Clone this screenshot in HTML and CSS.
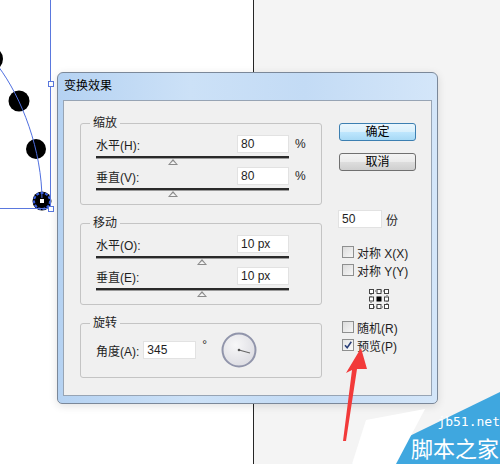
FILE: index.html
```html
<!DOCTYPE html>
<html lang="zh-CN">
<head>
  <meta charset="UTF-8">
  <title>变换效果</title>
  <link rel="stylesheet" href="styles.css">
</head>
<body>
  <div class="screen">
    <div class="artboard"></div>
    <div class="pasteboard"></div>

    <!-- selected artwork on the canvas -->
    <svg class="artwork" width="253" height="230" viewBox="0 0 253 230">
      <circle cx="-9" cy="59" r="12" fill="#000"/>
      <circle cx="19" cy="101" r="10.5" fill="#000"/>
      <circle cx="36" cy="149" r="10" fill="#000"/>
      <circle cx="42" cy="201" r="9.5" fill="#000"/>
      <path d="M-2 66 C 22 98, 42 150, 42 201" fill="none" stroke="#4f6fe0" stroke-width="1"/>
      <circle cx="42" cy="201" r="8" fill="none" stroke="#3a5fe0" stroke-width="2" stroke-dasharray="3 1.5"/>
      <rect x="39.5" y="198.5" width="5" height="5" fill="#fff" stroke="#000" stroke-width="1"/>
      <line x1="50.5" y1="0" x2="50.5" y2="209" stroke="#5a78de"/>
      <line x1="0" y1="208.5" x2="50" y2="208.5" stroke="#5a78de"/>
      <rect x="48.5" y="81.5" width="5" height="5" fill="#fff" stroke="#5a78de"/>
      <rect x="48.5" y="206.5" width="5" height="5" fill="#fff" stroke="#5a78de"/>
    </svg>

    <div class="dialog">
      <div class="titlebar">变换效果</div>
      <div class="client">
        <div class="left">
          <fieldset class="group">
            <legend>缩放</legend>
            <div class="field">
              <label>水平(H):</label>
              <input class="box" value="80" readonly>
              <span class="unit">%</span>
              <div class="slider"><span class="thumb" style="left: 40%"></span></div>
            </div>
            <div class="field">
              <label>垂直(V):</label>
              <input class="box" value="80" readonly>
              <span class="unit">%</span>
              <div class="slider"><span class="thumb" style="left: 40%"></span></div>
            </div>
          </fieldset>

          <fieldset class="group">
            <legend>移动</legend>
            <div class="field">
              <label>水平(O):</label>
              <input class="box" value="10 px" readonly>
              <span class="unit"></span>
              <div class="slider"><span class="thumb" style="left: 55%"></span></div>
            </div>
            <div class="field">
              <label>垂直(E):</label>
              <input class="box" value="10 px" readonly>
              <span class="unit"></span>
              <div class="slider"><span class="thumb" style="left: 55%"></span></div>
            </div>
          </fieldset>

          <fieldset class="group rotate">
            <legend>旋转</legend>
            <div class="angle-row">
              <label>角度(A):</label>
              <input class="box angle" value="345" readonly>
              <span class="deg">°</span>
              <div class="dial">
                <svg width="36" height="36" viewBox="0 0 36 36">
                  <defs>
                    <radialGradient id="dialFill" cx="40%" cy="35%" r="70%">
                      <stop offset="0" stop-color="#f7f7f8"/>
                      <stop offset="1" stop-color="#dcdce2"/>
                    </radialGradient>
                  </defs>
                  <circle cx="18" cy="18" r="16.5" fill="url(#dialFill)" stroke="#9195ab" stroke-width="2"/>
                  <line x1="18" y1="18" x2="29" y2="21" stroke="#666" stroke-width="1.2"/>
                  <circle cx="18" cy="18" r="1.3" fill="#555"/>
                </svg>
              </div>
            </div>
          </fieldset>
        </div>

        <div class="right">
          <button class="btn primary">确定</button>
          <button class="btn">取消</button>

          <div class="count">
            <input class="box" value="50" readonly>
            <span>份</span>
          </div>

          <div class="checks">
            <div class="check"><span class="tick"></span>对称 X(X)</div>
            <div class="check"><span class="tick"></span>对称 Y(Y)</div>
          </div>

          <div class="refpoint">
            <svg width="20" height="20" viewBox="0 0 20 20">
              <rect x="2" y="2" width="16" height="16" fill="none" stroke="#555" stroke-width="1" stroke-dasharray="1 1"/>
              <rect x="0.5" y="0.5" width="4" height="4" fill="#fff" stroke="#444"/>
              <rect x="8" y="0.5" width="4" height="4" fill="#fff" stroke="#444"/>
              <rect x="15.5" y="0.5" width="4" height="4" fill="#fff" stroke="#444"/>
              <rect x="0.5" y="8" width="4" height="4" fill="#fff" stroke="#444"/>
              <rect x="8" y="8" width="4" height="4" fill="#000" stroke="#000"/>
              <rect x="15.5" y="8" width="4" height="4" fill="#fff" stroke="#444"/>
              <rect x="0.5" y="15.5" width="4" height="4" fill="#fff" stroke="#444"/>
              <rect x="8" y="15.5" width="4" height="4" fill="#fff" stroke="#444"/>
              <rect x="15.5" y="15.5" width="4" height="4" fill="#fff" stroke="#444"/>
            </svg>
          </div>

          <div class="checks">
            <div class="check"><span class="tick"></span>随机(R)</div>
            <div class="check"><span class="tick on">
              <svg width="10" height="10" viewBox="0 0 10 10"><path d="M2 5.2 L4.2 7.8 L8.3 1.8" fill="none" stroke="#2a3f78" stroke-width="1.6"/></svg>
            </span>预览(P)</div>
          </div>
        </div>
      </div>
    </div>

    <!-- annotation arrow -->
    <svg class="arrow" width="40" height="100" viewBox="340 345 40 100">
      <polygon points="361,348 346,373 352,370 343,441 346,441 357,369 367,369" fill="#f23a3a"/>
    </svg>

    <!-- site watermark -->
    <div class="watermark">
      <svg width="150" height="72" viewBox="350 392 150 72">
        <polygon points="500,392 352,464 500,464" fill="#3fa7df"/>
        <polygon points="366,420 425,409 396,464 352,464" fill="#fff"/>
      </svg>
      <span class="wm-url">jb51.net</span>
      <span class="wm-name">脚本之家</span>
    </div>
  </div>
</body>
</html>
```

FILE: styles.css
```css
* {
  box-sizing: border-box;
}

body {
  margin: 0;
  font-family: 'Liberation Sans', 'Noto Sans CJK SC', sans-serif;
  font-size: 12px;
  color: #1e1e1e;
}

.screen {
  position: relative;
  width: 500px;
  height: 464px;
  overflow: hidden;
  display: flex;
}

.artboard {
  width: 253px;
  background: #ffffff;
}

.pasteboard {
  flex: 1;
  background: #f4f4f4;
  border-left: 1px solid #262626;
}

.artwork {
  position: absolute;
  left: 0;
  top: 0;
  overflow: visible;
}

/* dialog window */
.dialog {
  position: absolute;
  left: 57px;
  top: 72px;
  width: 381px;
  height: 332px;
  padding: 0 5px 7px 5px;
  border: 1px solid #7b8899;
  border-radius: 6px 6px 5px 5px;
  background: linear-gradient(90deg, #b5d2f2 0%, #cce1f7 35%, #c3dbf5 65%, #d4e6f9 100%);
  box-shadow: 0 2px 8px rgba(0, 0, 0, 0.12);
  display: flex;
  flex-direction: column;
}

.titlebar {
  height: 27px;
  line-height: 27px;
  padding-left: 1px;
  color: #000;
}

.client {
  flex: 1;
  background: #f0f0f0;
  border: 1px solid #97a4b4;
  padding: 15px 0 0 16px;
  display: flex;
  gap: 17px;
}

.left {
  width: 242px;
  display: flex;
  flex-direction: column;
  gap: 11px;
}

.group {
  margin: 0;
  padding: 5px 16px 5px 15px;
  border: 1px solid #c4c4c4;
  border-radius: 3px;
}

.group legend {
  padding: 0 3px;
  margin-left: -6px;
  line-height: 14px;
}

.field {
  display: grid;
  grid-template-columns: 1fr 52px 16px;
  grid-template-rows: 18px 14px;
  align-items: center;
}

.box {
  height: 18px;
  width: 100%;
  border: 1px solid #e2e2e2;
  background: #ffffff;
  font: inherit;
  color: #1e1e1e;
  padding: 0 3px;
  outline: none;
}

.unit {
  padding-left: 6px;
}

.slider {
  grid-column: 1 / 3;
  position: relative;
  height: 14px;
  align-self: start;
}

.slider::before {
  content: '';
  position: absolute;
  left: 0;
  right: 0;
  top: 3px;
  height: 2px;
  background: #2a2a2a;
  border-bottom: 1px solid #9a9a9a;
}

.thumb {
  position: absolute;
  top: 6px;
  width: 0;
  height: 0;
  margin-left: -5px;
  border-left: 5px solid transparent;
  border-right: 5px solid transparent;
  border-bottom: 6px solid #8a8a8a;
}

.thumb::after {
  content: '';
  position: absolute;
  left: -3px;
  top: 2px;
  border-left: 3px solid transparent;
  border-right: 3px solid transparent;
  border-bottom: 3px solid #f4f4f4;
}

.rotate {
  padding-top: 2px;
  padding-bottom: 9px;
}

.angle-row {
  display: flex;
  align-items: center;
  height: 36px;
}

.box.angle {
  width: 53px;
  margin-left: 4px;
}

.deg {
  margin-left: 6px;
  align-self: flex-start;
  margin-top: 6px;
}

.dial {
  margin-left: 14px;
  height: 36px;
}

/* right column */
.right {
  width: 77px;
  padding-top: 7px;
  display: flex;
  flex-direction: column;
}

.btn {
  height: 18px;
  width: 77px;
  padding: 0;
  font: inherit;
  color: #000;
  border: 1px solid #707070;
  border-radius: 3px;
  background: linear-gradient(#f3f3f3, #ebebeb 48%, #dddddd 52%, #cfcfcf);
  line-height: 16px;
}

.btn.primary {
  border-color: #3c7fb1;
  background: linear-gradient(#eaf6fd, #d9f0fc 48%, #bee6fd 52%, #a7d9f5);
  margin-bottom: 12px;
}

.count {
  margin-top: 39px;
  display: flex;
  align-items: center;
  gap: 4px;
  margin-left: -1px;
}

.count .box {
  width: 44px;
}

.checks {
  margin-top: 15px;
  display: flex;
  flex-direction: column;
}

.check {
  height: 18px;
  display: flex;
  align-items: center;
  gap: 3px;
  padding-left: 3px;
}

.tick {
  width: 12px;
  height: 12px;
  border: 1px solid #8e8f8f;
  background: linear-gradient(135deg, #dcdcdc, #f6f6f6);
  display: flex;
  align-items: center;
  justify-content: center;
}

.tick.on {
  background: linear-gradient(135deg, #e4e4e4, #fbfbfb);
}

.refpoint {
  margin-top: 10px;
  height: 20px;
  display: flex;
  justify-content: center;
  padding-left: 2px;
}

.refpoint + .checks {
  margin-top: 9px;
}

/* overlays */
.arrow {
  position: absolute;
  left: 340px;
  top: 345px;
}

.watermark {
  position: absolute;
  left: 350px;
  top: 392px;
  width: 150px;
  height: 72px;
}

.watermark svg {
  display: block;
}

.wm-url {
  position: absolute;
  right: 0;
  top: 23px;
  font-family: 'DejaVu Sans Mono', monospace;
  font-size: 13px;
  line-height: 13px;
  color: #ffffff;
}

.wm-name {
  position: absolute;
  right: 1px;
  top: 44px;
  font-family: 'Noto Sans CJK SC', sans-serif;
  font-size: 22px;
  line-height: 22px;
  color: #ffffff;
}
```
